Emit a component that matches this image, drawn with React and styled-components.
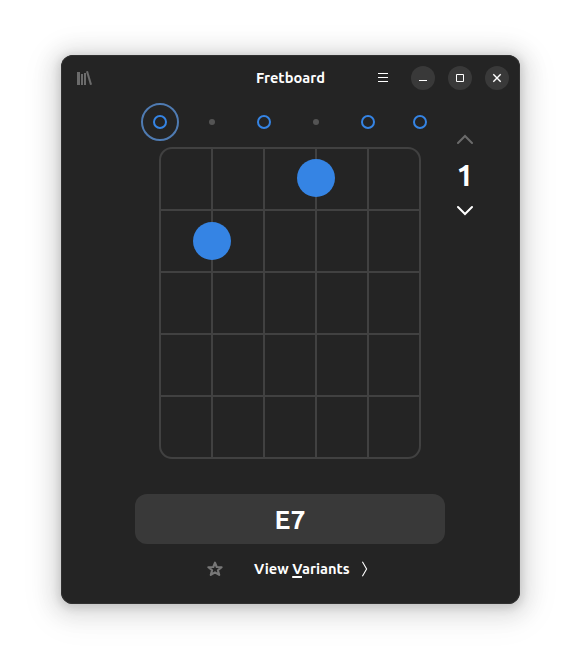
import React from "react";
import styled, { createGlobalStyle } from "styled-components";

const GlobalStyle = createGlobalStyle`
  * { box-sizing: border-box; }
  body {
    margin: 0;
    background: #fff;
    font-family: Ubuntu, "Noto Sans", sans-serif;
    color: #fff;
  }
  button { font: inherit; color: inherit; border: 0; padding: 0; background: none; }
  svg { display: block; }
`;

const Desktop = styled.div`
  height: 671px;
  padding: 55px 61px 67px;
  overflow: hidden;
`;

const Window = styled.main`
  width: 459px;
  height: 549px;
  display: flex;
  flex-direction: column;
  background: #242424;
  border-radius: 12px;
  box-shadow:
    inset 0 0 0 1px #303030,
    0 2px 8px 2px rgba(0, 0, 0, 0.13),
    0 3px 20px 10px rgba(0, 0, 0, 0.09),
    0 6px 32px 16px rgba(0, 0, 0, 0.04);
`;

const Header = styled.header`
  height: 46px;
  padding: 0 11px;
  display: grid;
  grid-template-columns: 1fr auto 1fr;
  align-items: center;
`;

const LibraryButton = styled.button`
  width: 16px;
  height: 16px;
  margin-left: 4px;
`;

const Title = styled.h1`
  margin: 0;
  width: 75px;
  font-size: 14.67px;
  font-weight: 600;
  line-height: 20px;
  text-align: center;
  white-space: nowrap;
`;

const Controls = styled.div`
  display: flex;
  justify-content: flex-end;
  align-items: center;
  gap: 13px;
`;

const MenuButton = styled.button`
  width: 16px;
  height: 16px;
  margin-right: 7px;
`;

const WindowButton = styled.button`
  width: 24px;
  height: 24px;
  display: grid;
  place-items: center;
  border-radius: 50%;
  background: #393939;
`;

const Editor = styled.section`
  display: grid;
  grid-template-columns: 312px 38px;
  padding: 2px 0 0 73px;
`;

const Strings = styled.div`
  display: grid;
  grid-template-columns: repeat(6, 52px);
  height: 38px;
`;

const StringToggle = styled.button`
  width: 38px;
  height: 38px;
  justify-self: center;
  display: grid;
  place-items: center;
  border-radius: 50%;
  border: 2px solid ${(p) => (p.$focused ? "#4f7bb2" : "transparent")};
`;

const OpenMark = styled.span`
  width: 14px;
  height: 14px;
  border: 2px solid #3584e4;
  border-radius: 50%;
`;

const IdleMark = styled.span`
  width: 6px;
  height: 6px;
  border-radius: 50%;
  background: #545454;
`;

const Neck = styled.div`
  position: relative;
  width: 262px;
  height: 312px;
  margin: 6px 0 0 25px;
  display: grid;
  grid-template: repeat(5, 60px) / repeat(5, 50px);
  gap: 2px;
  border: 2px solid #414141;
  border-radius: 13px;
  background: #414141;
`;

const Cell = styled.span`
  background: #242424;
  &:nth-child(1) { border-top-left-radius: 11px; }
  &:nth-child(5) { border-top-right-radius: 11px; }
  &:nth-child(21) { border-bottom-left-radius: 11px; }
  &:nth-child(25) { border-bottom-right-radius: 11px; }
`;

const Finger = styled.span`
  position: absolute;
  width: 38px;
  height: 38px;
  left: ${(p) => p.$string * 52 - 20}px;
  top: ${(p) => p.$fret * 63 + 10}px;
  border-radius: 50%;
  background: #3584e4;
`;

const Position = styled.div`
  padding-top: 29px;
  display: flex;
  flex-direction: column;
  align-items: center;
`;

const PositionButton = styled.button`
  width: 16px;
  height: 16px;
  opacity: ${(p) => (p.$dim ? 0.32 : 1)};
`;

const FretNumber = styled.div`
  height: 55px;
  line-height: 55px;
  font-size: 30px;
  font-weight: 700;
`;

const ChordName = styled.div`
  width: 310px;
  height: 50px;
  margin: 35px 0 0 74px;
  border-radius: 12px;
  background: #393939;
  font-size: 26.67px;
  font-weight: 600;
  line-height: 51px;
  text-align: center;
`;

const Actions = styled.footer`
  display: flex;
  align-items: center;
  height: 34px;
  margin: 8px 0 0 146px;
`;

const StarButton = styled.button`
  width: 16px;
  height: 16px;
  margin-right: 31px;
`;

const VariantsButton = styled.button`
  display: flex;
  align-items: center;
  gap: 7px;
  font-size: 14.67px;
  font-weight: 600;
  line-height: 20px;
`;

const Label = styled.span`
  width: 97px;
  text-align: left;
  white-space: nowrap;
`;

const Mnemonic = styled.span`
  text-decoration: underline;
  text-decoration-thickness: 2px;
  text-underline-offset: 2px;
`;

const LibraryIcon = () => (
  <svg width="16" height="16" viewBox="0 0 16 16" fill="#6b6b6b">
    <path d="M1 2h3v13H1zM5 4h2v11H5zM8 3h2v12H8z" />
    <path d="M10 1.5l2-.5 4 13.5-2 .5z" />
  </svg>
);

const Chevron = ({ d }) => (
  <svg width="16" height="16" viewBox="0 0 16 16" fill="none" stroke="#fff" strokeWidth="2" strokeLinecap="round" strokeLinejoin="miter">
    <path d={d} />
  </svg>
);

const strings = ["open", "idle", "open", "idle", "open", "open"];
const fingers = [{ string: 3, fret: 0 }, { string: 1, fret: 1 }];

export default function App() {
  return (
    <>
      <GlobalStyle />
      <Desktop>
        <Window>
          <Header>
            <LibraryButton aria-label="Library"><LibraryIcon /></LibraryButton>
            <Title>Fretboard</Title>
            <Controls>
              <MenuButton aria-label="Menu">
                <svg width="16" height="16" viewBox="0 0 16 16" fill="#fff">
                  <path d="M3 3h10v1H3zM3 7h10v1H3zM3 11h10v1H3z" />
                </svg>
              </MenuButton>
              <WindowButton aria-label="Minimize">
                <svg width="16" height="16" viewBox="0 0 16 16"><path d="M4 10h8v1H4z" fill="#fff" /></svg>
              </WindowButton>
              <WindowButton aria-label="Maximize">
                <svg width="16" height="16" viewBox="0 0 16 16"><path d="M4.5 4.5h7v7h-7z" fill="none" stroke="#fff" /></svg>
              </WindowButton>
              <WindowButton aria-label="Close">
                <svg width="16" height="16" viewBox="0 0 16 16"><path d="M4.3 4.3l7.4 7.4M11.7 4.3l-7.4 7.4" stroke="#fff" strokeWidth="1.4" /></svg>
              </WindowButton>
            </Controls>
          </Header>
          <Editor>
            <div>
              <Strings>
                {strings.map((state, i) => (
                  <StringToggle key={i} $focused={i === 0} aria-label={`String ${i + 1}`}>
                    {state === "open" ? <OpenMark /> : <IdleMark />}
                  </StringToggle>
                ))}
              </Strings>
              <Neck>
                {Array.from({ length: 25 }, (_, i) => <Cell key={i} />)}
                {fingers.map((f) => <Finger key={f.string} $string={f.string} $fret={f.fret} />)}
              </Neck>
            </div>
            <Position>
              <PositionButton $dim aria-label="Previous position"><Chevron d="M1 11l7-7 7 7" /></PositionButton>
              <FretNumber>1</FretNumber>
              <PositionButton aria-label="Next position"><Chevron d="M1 4l7 7 7-7" /></PositionButton>
            </Position>
          </Editor>
          <ChordName>E7</ChordName>
          <Actions>
            <StarButton aria-label="Bookmark">
              <svg width="16" height="16" viewBox="0 0 16 16" fill="none" stroke="#777" strokeWidth="2.1" strokeLinejoin="round">
                <path d="M8 1.7l1.7 4.3 4.9.2-3.7 3 1.3 4.7L8 11.3l-4.2 2.6 1.3-4.7-3.7-3 4.9-.2z" />
              </svg>
            </StarButton>
            <VariantsButton>
              <Label>View <Mnemonic>V</Mnemonic>ariants</Label>
              <svg width="16" height="16" viewBox="0 0 16 16" fill="none" stroke="#fff" strokeWidth="1.1">
                <path d="M4.4.8L8.6 8l-4.2 7.2" />
              </svg>
            </VariantsButton>
          </Actions>
        </Window>
      </Desktop>
    </>
  );
}
